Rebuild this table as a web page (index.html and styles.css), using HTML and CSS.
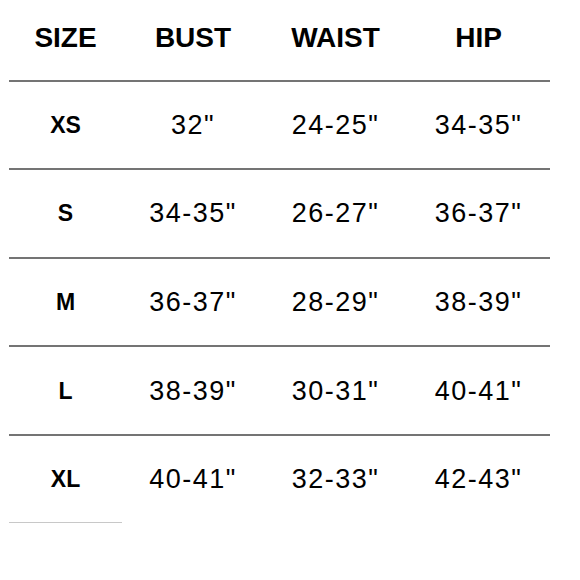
FILE: index.html
```html
<!DOCTYPE html>
<html>
<head>
<meta charset="utf-8">
<link rel="stylesheet" href="styles.css">
</head>
<body>
<div class="chart">
  <div class="row head">
    <div class="cell">SIZE</div>
    <div class="cell">BUST</div>
    <div class="cell">WAIST</div>
    <div class="cell">HIP</div>
  </div>
  <div class="row">
    <div class="cell size">XS</div>
    <div class="cell">32"</div>
    <div class="cell">24-25"</div>
    <div class="cell">34-35"</div>
  </div>
  <div class="row">
    <div class="cell size">S</div>
    <div class="cell">34-35"</div>
    <div class="cell">26-27"</div>
    <div class="cell">36-37"</div>
  </div>
  <div class="row">
    <div class="cell size">M</div>
    <div class="cell">36-37"</div>
    <div class="cell">28-29"</div>
    <div class="cell">38-39"</div>
  </div>
  <div class="row">
    <div class="cell size">L</div>
    <div class="cell">38-39"</div>
    <div class="cell">30-31"</div>
    <div class="cell">40-41"</div>
  </div>
  <div class="row">
    <div class="cell size">XL</div>
    <div class="cell">40-41"</div>
    <div class="cell">32-33"</div>
    <div class="cell">42-43"</div>
  </div>
  <div class="foot"></div>
</div>
</body>
</html>
```
FILE: styles.css
```css
html, body {
  margin: 0;
  padding: 0;
  background: #fff;
}
body {
  font-family: "Liberation Sans", Arial, sans-serif;
  color: #000;
}
.chart {
  width: 541px;
  padding-left: 9px;
}
.row {
  display: grid;
  grid-template-columns: 113px 142px 143px 143px;
  align-items: center;
  box-sizing: border-box;
  height: 88.6px;
  border-top: 2px solid #747474;
}
.row.head {
  border-top: none;
  height: 79.5px;
  padding-bottom: 4px;
}
.cell {
  text-align: center;
  font-size: 27px;
  letter-spacing: 1.5px;
  line-height: 32px;
}
.head .cell {
  font-size: 28px;
  font-weight: bold;
  letter-spacing: 0;
}
.cell.size {
  font-size: 23px;
  font-weight: bold;
  letter-spacing: 0;
}
.foot {
  width: 113px;
  height: 0;
  border-top: 1px solid #c8c8c8;
}
```
